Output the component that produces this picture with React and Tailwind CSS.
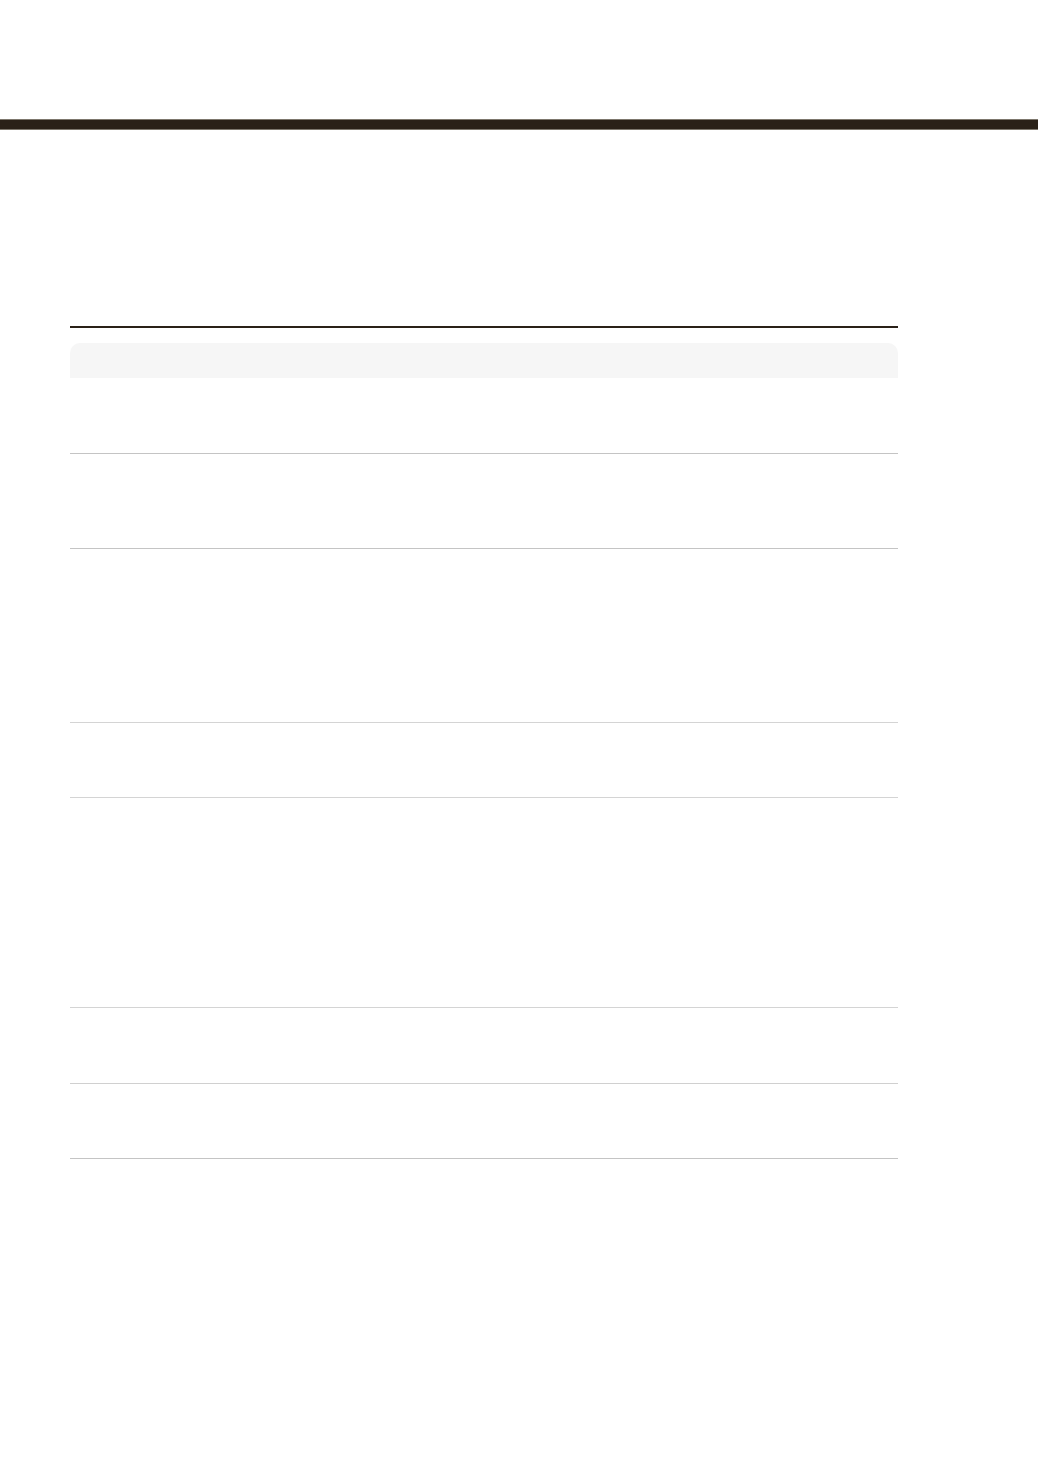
import React from 'react';

const rows = [
  { h: 'h-[75px]', border: 'border-[#c4c4c4]' },
  { h: 'h-[95px]', border: 'border-[#c4c4c4]' },
  { h: 'h-[174px]', border: 'border-[#d4d4d4]' },
  { h: 'h-[75px]', border: 'border-[#d4d4d4]' },
  { h: 'h-[210px]', border: 'border-[#d4d4d4]' },
  { h: 'h-[76px]', border: 'border-[#d0d0d0]' },
  { h: 'h-[75px]', border: 'border-[#c4c4c4]' },
];

export default function App() {
  return (
    <div className="min-h-[1472px] bg-white font-['Liberation_Sans',sans-serif]">
      {/* header band */}
      <div className="h-[119px]" />
      <div className="h-[11px] bg-[#2a2118] border-y border-[#7d776d]" />

      <main className="px-[70px] pt-[196px] w-[968px]">
        <div className="border-t-2 border-[#2a2118]" />

        <table className="mt-[15px] w-full table-fixed border-collapse">
          <colgroup>
            <col className="w-[81px]" />
            <col className="w-[381px]" />
            <col className="w-[366px]" />
          </colgroup>
          <thead>
            <tr className="h-[35px]">
              <th className="bg-[#f6f6f6] rounded-tl-[10px]" />
              <th className="bg-[#f6f6f6]" />
              <th className="bg-[#f6f6f6] rounded-tr-[10px]" />
            </tr>
          </thead>
          <tbody>
            {rows.map((r, i) => (
              <tr key={i} className={`${r.h} border-b ${r.border}`}>
                <td />
                <td />
                <td />
              </tr>
            ))}
          </tbody>
        </table>
      </main>
    </div>
  );
}
